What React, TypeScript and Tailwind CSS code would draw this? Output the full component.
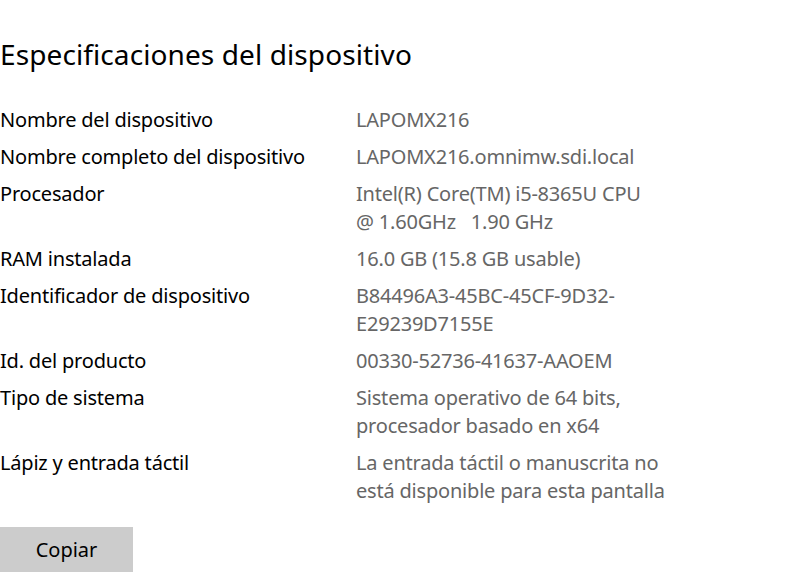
const rows: [string, string[]][] = [
  ['Nombre del dispositivo', ['LAPOMX216']],
  ['Nombre completo del dispositivo', ['LAPOMX216.omnimw.sdi.local']],
  ['Procesador', ['Intel(R) Core(TM) i5-8365U CPU', '@ 1.60GHz\u00a0\u00a0\u00a01.90 GHz']],
  ['RAM instalada', ['16.0 GB (15.8 GB usable)']],
  ['Identificador de dispositivo', ['B84496A3-45BC-45CF-9D32-', 'E29239D7155E']],
  ['Id. del producto', ['00330-52736-41637-AAOEM']],
  ['Tipo de sistema', ['Sistema operativo de 64 bits,', 'procesador basado en x64']],
  ['Lápiz y entrada táctil', ['La entrada táctil o manuscrita no', 'está disponible para esta pantalla']],
];

export default function App() {
  return (
    <div
      className="h-[585px] w-[805px] overflow-hidden bg-white"
      style={{ fontFamily: '"Noto Sans", "Open Sans", sans-serif' }}
    >
      <h1 className="pt-[34px] text-[28px] leading-[40px] tracking-[0.1px] text-black">
        Especificaciones del dispositivo
      </h1>
      <div className="mt-[32px] flex flex-col gap-[9px] text-[20px] leading-[28px] tracking-[-0.2px]">
        {rows.map(([label, value]) => (
          <div key={label} className="flex">
            <div className="w-[356px] shrink-0 text-black">{label}</div>
            <div className="text-[#666666]">
              {value.map((v) => (
                <div key={v}>{v}</div>
              ))}
            </div>
          </div>
        ))}
      </div>
      <button
        type="button"
        className="mt-[22px] h-[45px] w-[133px] bg-[#cccccc] text-[20px] text-black"
      >
        Copiar
      </button>
    </div>
  );
}
